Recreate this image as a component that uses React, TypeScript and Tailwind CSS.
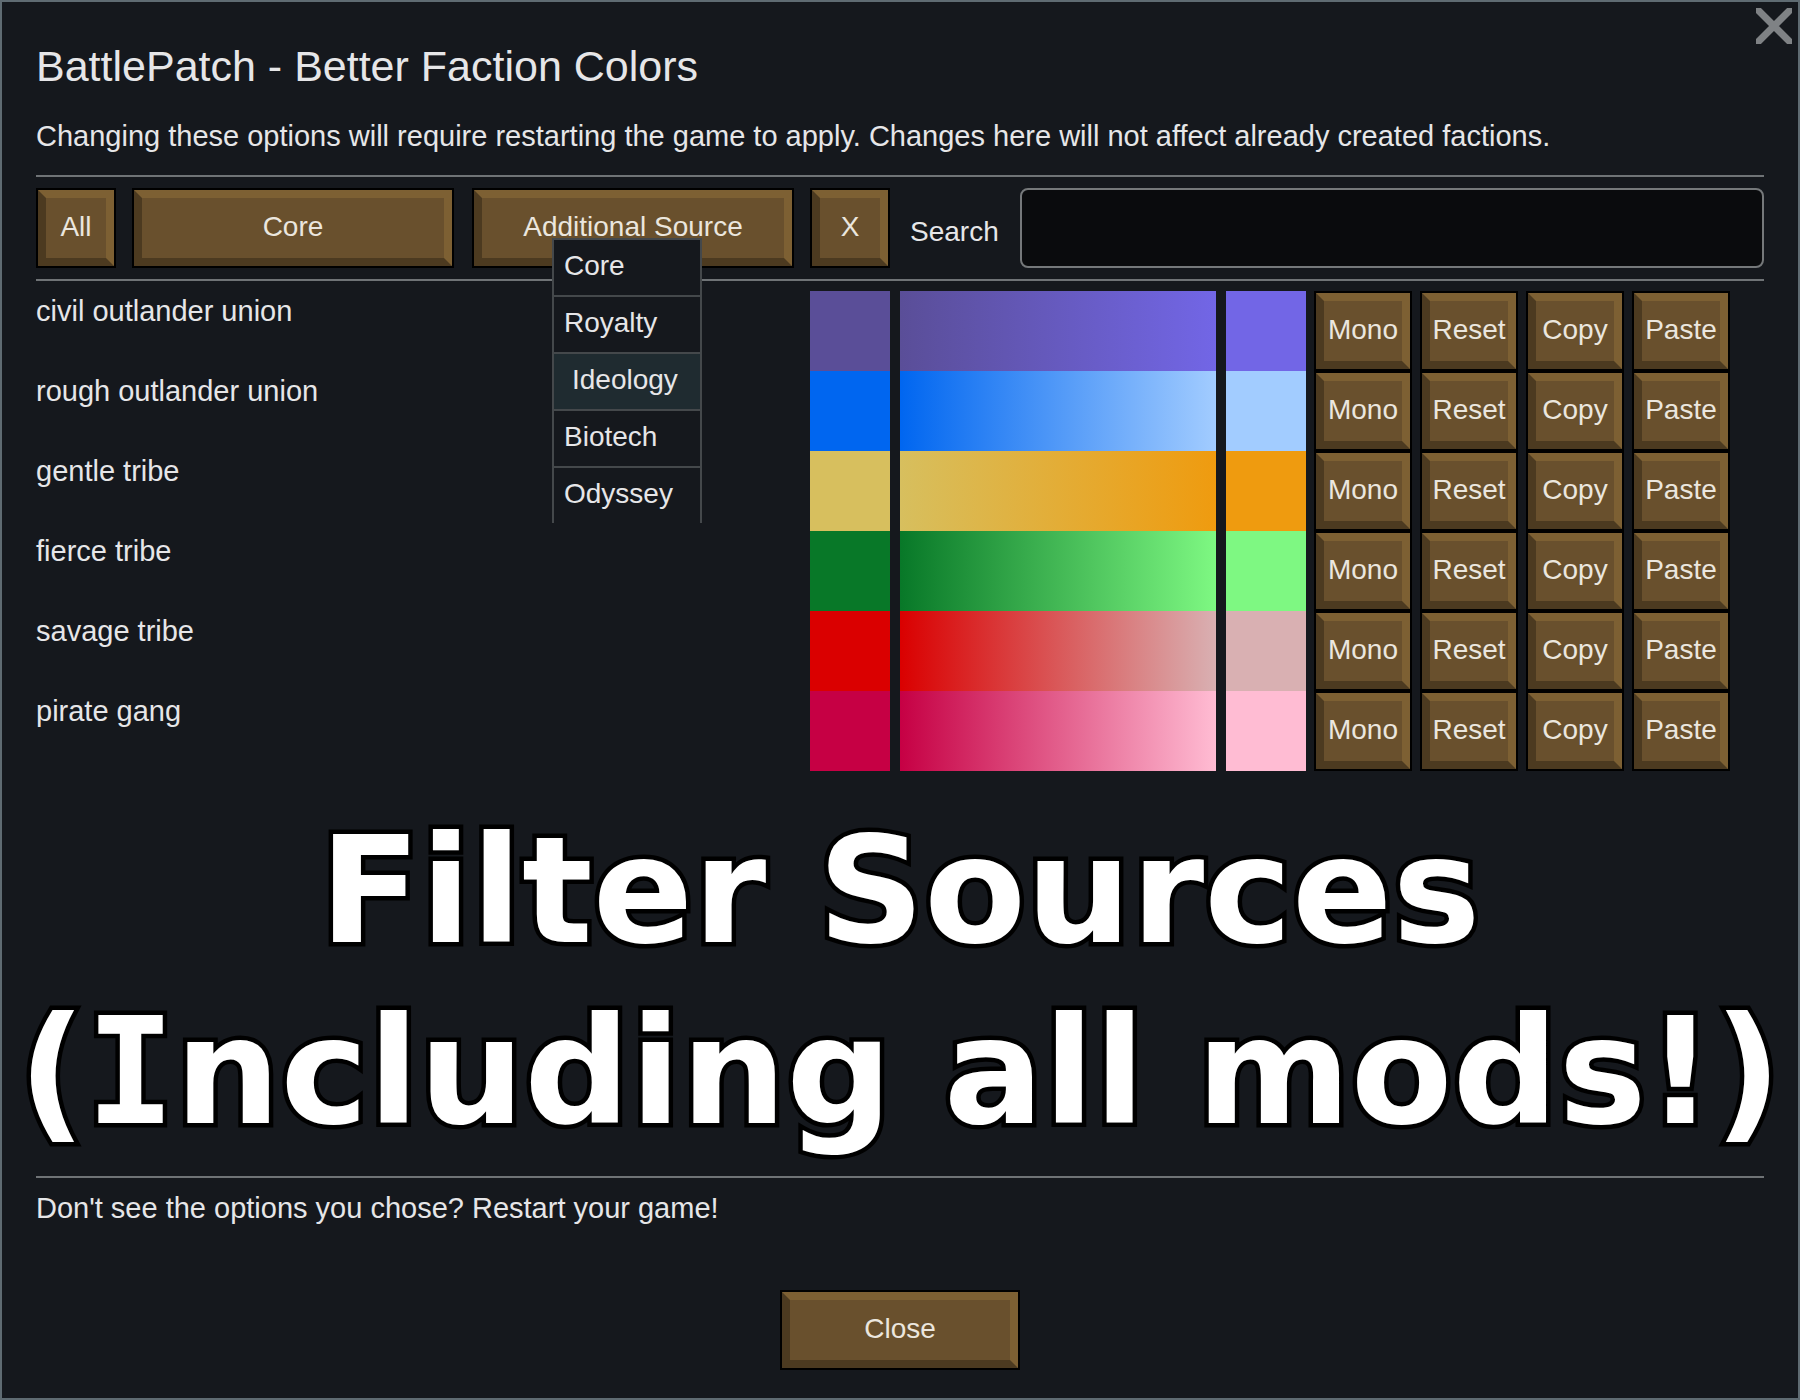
import React from "react";

const factions = [
  { name: "civil outlander union", from: "#5a4e98", to: "#7266e6" },
  { name: "rough outlander union", from: "#0066f0", to: "#a2ccff" },
  { name: "gentle tribe", from: "#d7bf5e", to: "#ef9b0f" },
  { name: "fierce tribe", from: "#087828", to: "#7ef882" },
  { name: "savage tribe", from: "#da0000", to: "#d9b0b2" },
  { name: "pirate gang", from: "#c60044", to: "#ffbcd3" },
];

const sources = ["Core", "Royalty", "Ideology", "Biotech", "Odyssey"];
const hoveredSource = "Ideology";

const rowActions = ["Mono", "Reset", "Copy", "Paste"];

function BevelButton({ children, className = "" }: { children: React.ReactNode; className?: string }) {
  return (
    <button type="button" className={`h-20 border-2 border-black text-[#ebe6de] ${className}`}>
      <span className="flex h-full items-center justify-center whitespace-nowrap border-8 border-t-[#7d6033] border-r-[#7d6033] border-b-[#4c3a20] border-l-[#4c3a20] bg-[#69502d] pb-0.5">
        {children}
      </span>
    </button>
  );
}

function Rule() {
  return <hr className="border-t-2 border-[#6f7376]" />;
}

function CloseIcon() {
  return (
    <svg viewBox="0 0 36 36" className="size-9 overflow-hidden" stroke="#7f8285" strokeWidth="7">
      <path d="M-4 -4L40 40M40 -4L-4 40" />
    </svg>
  );
}

function SourceMenu() {
  return (
    <ul className="absolute top-[50px] left-20 z-10 w-[150px] bg-[#15181d]">
      {sources.map((source) => (
        <li key={source}>
          <button
            type="button"
            className={`h-[57px] w-full border-x-2 border-t-2 border-[#44484b] pb-1 text-left ${
              source === hoveredSource ? "bg-[#1f2b30] pl-[18px]" : "pl-[10px]"
            }`}
          >
            {source}
          </button>
        </li>
      ))}
    </ul>
  );
}

function FactionRow({ name, from, to }: { name: string; from: string; to: string }) {
  return (
    <li className="flex h-20">
      <span className="flex-1 pt-0.5 text-[29px]">{name}</span>
      <button type="button" aria-label={`${name} first color`} className="w-20" style={{ background: from }} />
      <div className="mx-[10px] w-[316px]" style={{ background: `linear-gradient(to right, ${from}, ${to})` }} />
      <button type="button" aria-label={`${name} last color`} className="w-20" style={{ background: to }} />
      <div className="ml-2 flex gap-2">
        {rowActions.map((action) => (
          <BevelButton key={action} className="w-[98px]">
            {action}
          </BevelButton>
        ))}
      </div>
    </li>
  );
}

export default function App() {
  return (
    <div className="relative flex min-h-screen flex-col border-2 border-[#5f6b72] bg-[#15181d] px-[34px] pt-10 pb-7 font-['Liberation_Sans',Arial,sans-serif] text-[28px] leading-9 text-[#e6e6e8]">
      <button type="button" aria-label="Close window" className="absolute top-1.5 right-1.5">
        <CloseIcon />
      </button>

      <h1 className="text-[43px] leading-[48px]">BattlePatch - Better Faction Colors</h1>
      <p className="mt-7 mb-[21px] text-[29px]">
        Changing these options will require restarting the game to apply. Changes here will not affect already created
        factions.
      </p>

      <Rule />
      <div className="my-[11px] flex items-center">
        <BevelButton className="w-20">All</BevelButton>
        <BevelButton className="ml-4 w-[322px]">Core</BevelButton>
        <div className="relative ml-[18px]">
          <BevelButton className="w-[322px]">Additional Source</BevelButton>
          <SourceMenu />
        </div>
        <BevelButton className="ml-4 w-20">X</BevelButton>
        <label htmlFor="search" className="ml-5 w-[110px] pt-2">
          Search
        </label>
        <input
          id="search"
          type="text"
          className="h-20 min-w-0 flex-1 rounded-lg border-2 border-[#75787a] bg-[#0a0b0d] px-4 outline-none"
        />
      </div>
      <Rule />

      <ul className="mt-[10px] pr-[34px]">
        {factions.map((faction) => (
          <FactionRow key={faction.name} {...faction} />
        ))}
      </ul>

      {/* caption runs wider than the padded content */}
      <h2 className="-mx-[34px] mt-[30px] mb-[13px] text-center font-['DejaVu_Sans',Verdana,sans-serif] text-[148px] leading-[181px] font-bold whitespace-nowrap text-white [-webkit-text-stroke:9px_black] [paint-order:stroke_fill] [stroke-linejoin:round]">
        Filter Sources
        <br />(<span className="font-['DejaVu_Sans_Mono',monospace]">I</span>ncluding all mods!)
      </h2>

      <Rule />
      <p className="mt-3 text-[29px]">Don&apos;t see the options you chose? Restart your game!</p>
      <BevelButton className="mx-auto mt-auto w-60">Close</BevelButton>
    </div>
  );
}
